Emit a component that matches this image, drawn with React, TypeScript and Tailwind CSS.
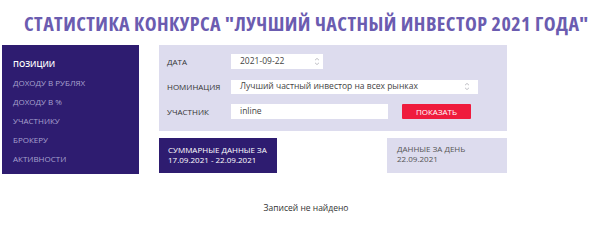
import React from "react";

const Spin = () => (
  <svg width="6" height="9" viewBox="0 0 6 9" className="shrink-0">
    <path d="M1 3.2 L3 1.4 L5 3.2" fill="none" stroke="#b0b0b8" strokeWidth="0.8" />
    <path d="M1 5.8 L3 7.6 L5 5.8" fill="none" stroke="#b0b0b8" strokeWidth="0.8" />
  </svg>
);

export default function App() {
  const items = ["ПОЗИЦИИ", "ДОХОДУ В РУБЛЯХ", "ДОХОДУ В %", "УЧАСТНИКУ", "БРОКЕРУ", "АКТИВНОСТИ"];
  return (
    <div
      className="w-[590px] h-[249px] bg-white overflow-hidden"
      style={{ fontFamily: "'Open Sans', 'Noto Sans', sans-serif" }}
    >
      <h1 className="pt-[13px] pl-[24px] h-[45px] text-[20px] leading-[22px] font-bold text-[#6b5cb0] whitespace-nowrap font-stretch-[80%] tracking-[0.45px]">
        СТАТИСТИКА КОНКУРСА "ЛУЧШИЙ ЧАСТНЫЙ ИНВЕСТОР 2021 ГОДА"
      </h1>
      <div className="flex">
        <div className="ml-[2px] w-[137px] h-[129px] bg-[#2e1c70] pt-[9px] pl-[11px]">
          {items.map((t, i) => (
            <div
              key={t}
              className={
                "h-[19px] leading-[19px] text-[8px] whitespace-nowrap " +
                (i === 0 ? "text-white font-semibold" : "text-[#a8a2cf]")
              }
            >
              {t}
            </div>
          ))}
        </div>
        <div className="ml-[20px] w-[348px]">
          <div className="h-[86px] bg-[#dddcee] pt-[9px] pl-[8px] flex flex-col gap-[10px] text-[8px] text-[#333]">
            <div className="flex items-center h-[15px]">
              <div className="w-[64px]">ДАТА</div>
              <div className="w-[92px] h-[15px] bg-white flex items-center pl-[9px] pr-[3px] text-[#444] text-[8.5px]">
                <span className="flex-1">2021-09-22</span>
                <Spin />
              </div>
            </div>
            <div className="flex items-center h-[15px]">
              <div className="w-[64px]">НОМИНАЦИЯ</div>
              <div className="w-[247px] h-[14px] bg-white flex items-center pl-[9px] pr-[8px] text-[#444] text-[8.5px]">
                <span className="flex-1 whitespace-nowrap">Лучший частный инвестор на всех рынках</span>
                <Spin />
              </div>
            </div>
            <div className="flex items-center h-[15px]">
              <div className="w-[64px]">УЧАСТНИК</div>
              <div className="w-[157px] h-[15px] bg-white flex items-center pl-[9px] text-[#444] text-[8.5px]">
                inline
              </div>
              <div className="ml-[14px] w-[69px] h-[15px] bg-[#ef1b3d] rounded-[1px] flex items-center justify-center text-white text-[8px]">
                ПОКАЗАТЬ
              </div>
            </div>
          </div>
          <div className="flex mt-[7px]">
            <div className="w-[118px] h-[35px] bg-[#2e1c70] pl-[9px] pt-[7px] text-white text-[8px] leading-[10px]">
              <div>СУММАРНЫЕ ДАННЫЕ ЗА</div>
              <div>17.09.2021 - 22.09.2021</div>
            </div>
            <div className="ml-auto w-[120px] h-[35px] bg-[#dddcee] pl-[10px] pt-[6px] text-[#555] text-[8px] leading-[10px]">
              <div>ДАННЫЕ ЗА ДЕНЬ</div>
              <div>22.09.2021</div>
            </div>
          </div>
        </div>
      </div>
      <div className="mt-[28px] pl-[22px] text-center text-[8.5px] text-[#333]">Записей не найдено</div>
    </div>
  );
}
